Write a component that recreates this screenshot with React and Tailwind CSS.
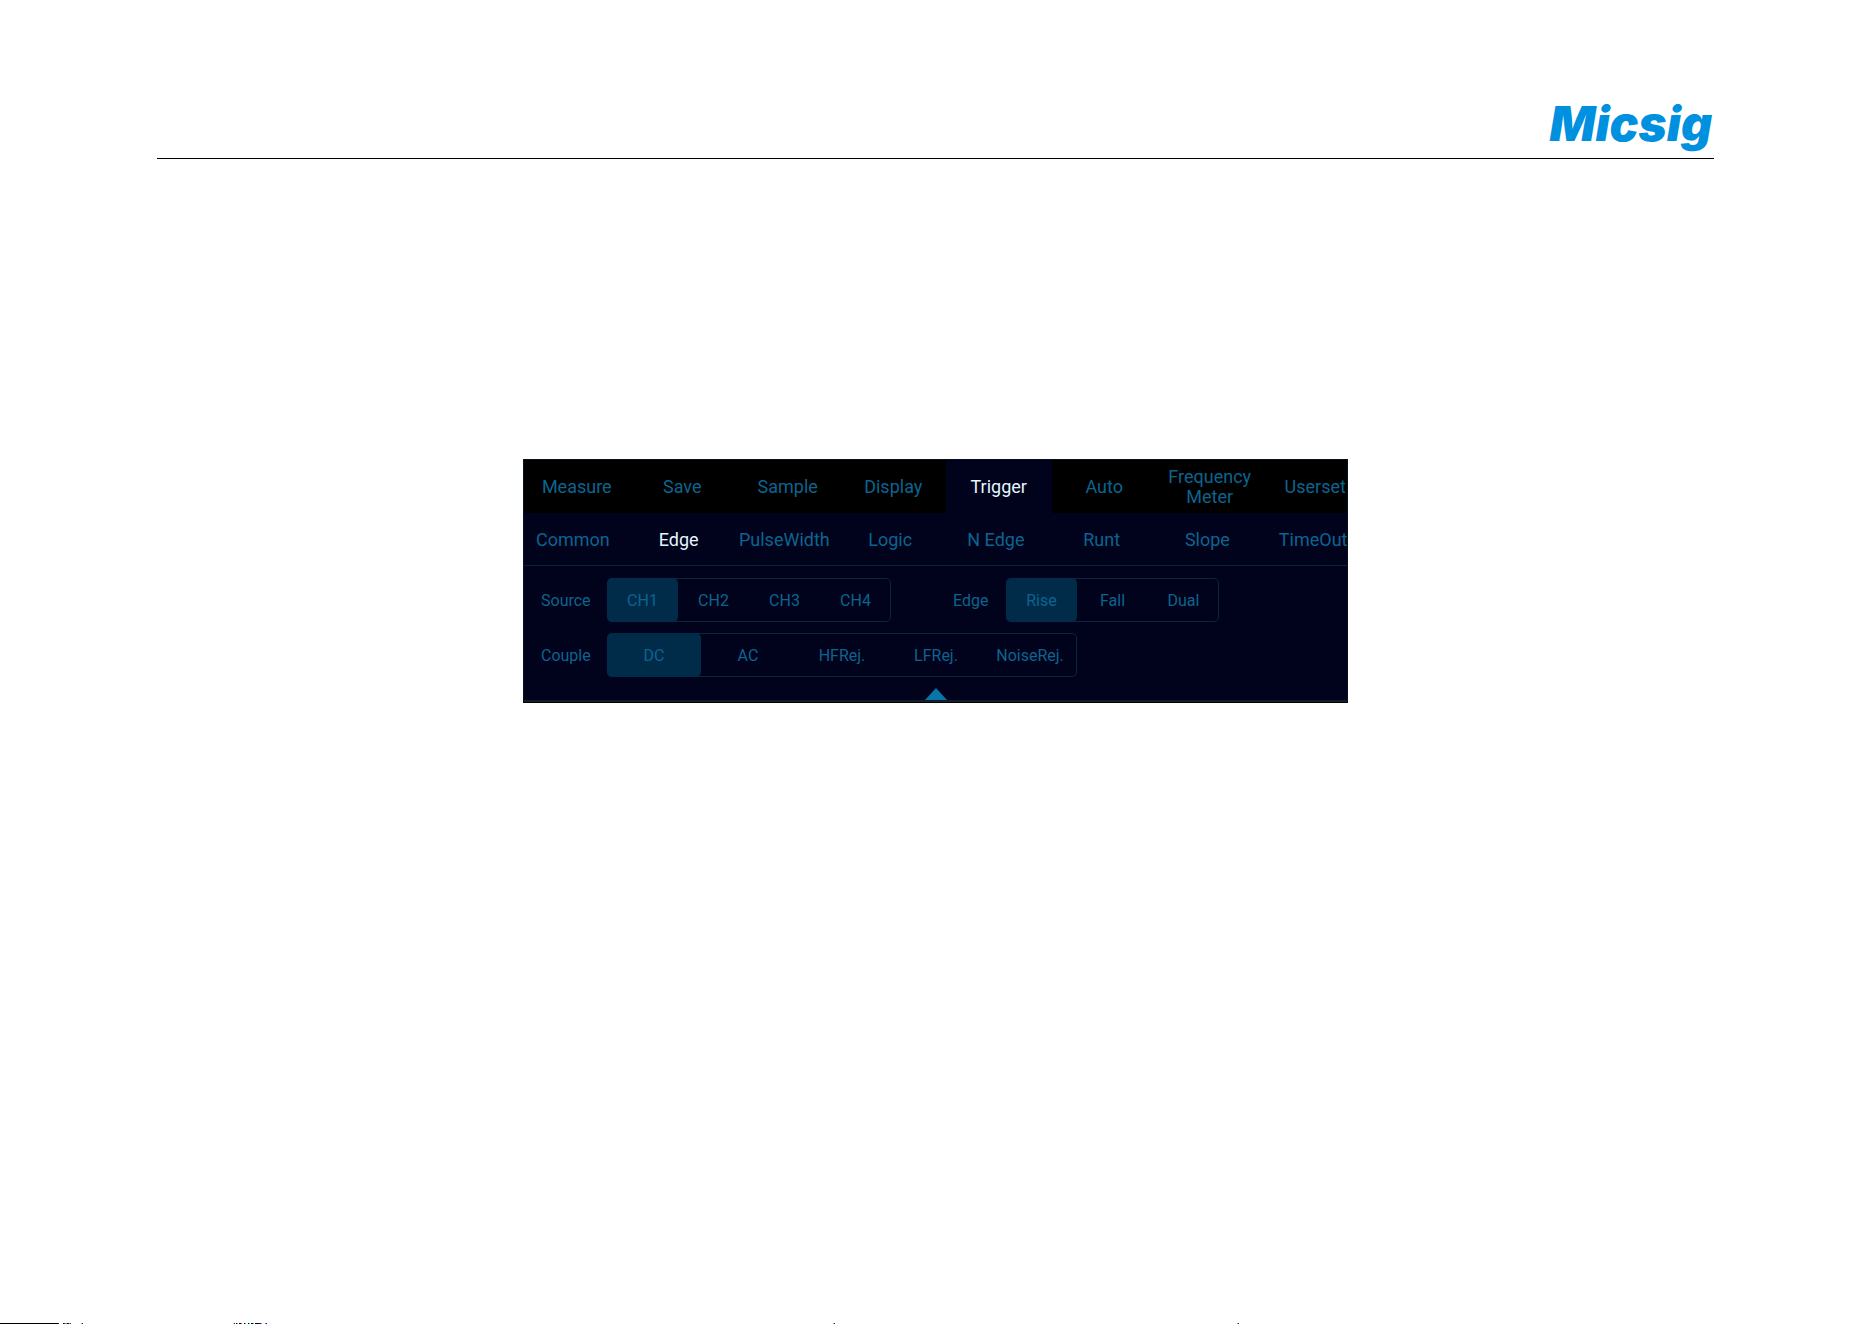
import { useState } from "react";

const tabs = ["Measure", "Save", "Sample", "Display", "Trigger", "Auto", "Frequency Meter", "Userset"];
const triggerTypes = ["Common", "Edge", "PulseWidth", "Logic", "N Edge", "Runt", "Slope", "TimeOut"];

const specks = [
  [0, 58, "#000"], [58, 1, "#1a00c8"], [63, 1, "#000"], [64, 1, "#a02010"], [65, 1, "#e07020"],
  [66, 1, "#20b0d0"], [67, 2, "#000080"], [69, 1, "#20d0e0"], [70, 1, "#803010"],
  [81, 1, "#d09040"], [82, 1, "#2010c0"],
  [233, 1, "#e0e040"], [234, 1, "#1010a0"], [236, 1, "#000"], [237, 1, "#20d0e0"], [239, 2, "#000"],
  [241, 1, "#e04040"], [244, 1, "#000"], [245, 1, "#20d0e0"], [248, 1, "#000"], [249, 1, "#20e0c0"],
  [251, 2, "#000"], [253, 1, "#20d0e0"], [255, 3, "#000"], [258, 3, "#102060"], [261, 1, "#20d0e0"],
  [265, 1, "#e04060"], [266, 1, "#1010c0"],
  [833, 1, "#d09040"], [834, 1, "#2010c0"], [1237, 1, "#d09040"], [1238, 1, "#2010c0"],
];

function Segmented({ id, label, options, cell, labelWidth }) {
  const [value, setValue] = useState(options[0]);
  return (
    <div className="flex items-center">
      <span id={id} className={`${labelWidth} pt-0.5 text-[16px]`}>{label}</span>
      <div role="group" aria-labelledby={id} className="flex h-11 rounded-[5px] border border-[#07283e]">
        {options.map((o) => (
          <button
            key={o}
            type="button"
            aria-pressed={o === value}
            onClick={() => setValue(o)}
            className={`${cell} -my-px pt-0.5 text-center text-[16px] first:-ml-px last:-mr-px ${o === value ? "rounded-[5px] bg-[#002c49]" : ""}`}
          >
            {o}
          </button>
        ))}
      </div>
    </div>
  );
}

export default function App() {
  const [tab, setTab] = useState("Trigger");
  const [type, setType] = useState("Edge");
  return (
    <div className="flex min-h-screen flex-col bg-white font-['Roboto',sans-serif]">
      <header className="mr-[158px] ml-[157px] flex h-[159px] items-end justify-end border-b border-black">
        <span className="pr-0.5 font-['Inter',sans-serif] text-[48px] leading-[68px] font-black text-[#0090e0] italic">Micsig</span>
      </header>

      <main className="mr-[158px] ml-[157px] flex justify-center pt-[300px]">
        <section className="w-full max-w-[825px] overflow-hidden border border-[#031420] border-b-black bg-[#00031b] text-[#0c6490]">
          <nav className="grid h-[53px] w-[844px] grid-cols-8 bg-black">
            {tabs.map((t) => (
              <button
                key={t}
                type="button"
                onClick={() => setTab(t)}
                className={`px-2 text-[18px] leading-5 ${t === tab ? "bg-[#00031b] text-[#e4f6ff]" : ""}`}
              >
                {t}
              </button>
            ))}
          </nav>
          <div className="border-b border-[#052637]">
            <nav className="-ml-1 grid h-[52px] w-[846px] grid-cols-8">
              {triggerTypes.map((t) => (
                <button
                  key={t}
                  type="button"
                  onClick={() => setType(t)}
                  className={`text-[18px] ${t === type ? "text-[#e4f6ff]" : ""}`}
                >
                  {t}
                </button>
              ))}
            </nav>
          </div>
          <div className="flex flex-col gap-[11px] pt-3 pl-[17px]">
            <div className="flex gap-[62px]">
              <Segmented id="source" label="Source" options={["CH1", "CH2", "CH3", "CH4"]} cell="w-[71px]" labelWidth="w-[66px]" />
              <Segmented id="edge" label="Edge" options={["Rise", "Fall", "Dual"]} cell="w-[71px]" labelWidth="w-[53px]" />
            </div>
            <Segmented id="couple" label="Couple" options={["DC", "AC", "HFRej.", "LFRej.", "NoiseRej."]} cell="w-[94px]" labelWidth="w-[66px]" />
          </div>
          <div className="flex h-[25px] items-end justify-center border-b-2 border-[#0f1f2c]">
            <svg width="22" height="12" viewBox="0 0 22 12" aria-hidden="true">
              <path d="M11 0 22 12H0Z" fill="#0875a8" />
            </svg>
          </div>
        </section>
      </main>

      <footer className="mt-auto h-px overflow-hidden">
        <svg className="block" width="1300" height="1" shapeRendering="crispEdges" aria-hidden="true">
          {specks.map(([x, w, fill]) => (
            <rect key={x} x={x} y="0" width={w} height="1" fill={fill} />
          ))}
        </svg>
      </footer>
    </div>
  );
}
